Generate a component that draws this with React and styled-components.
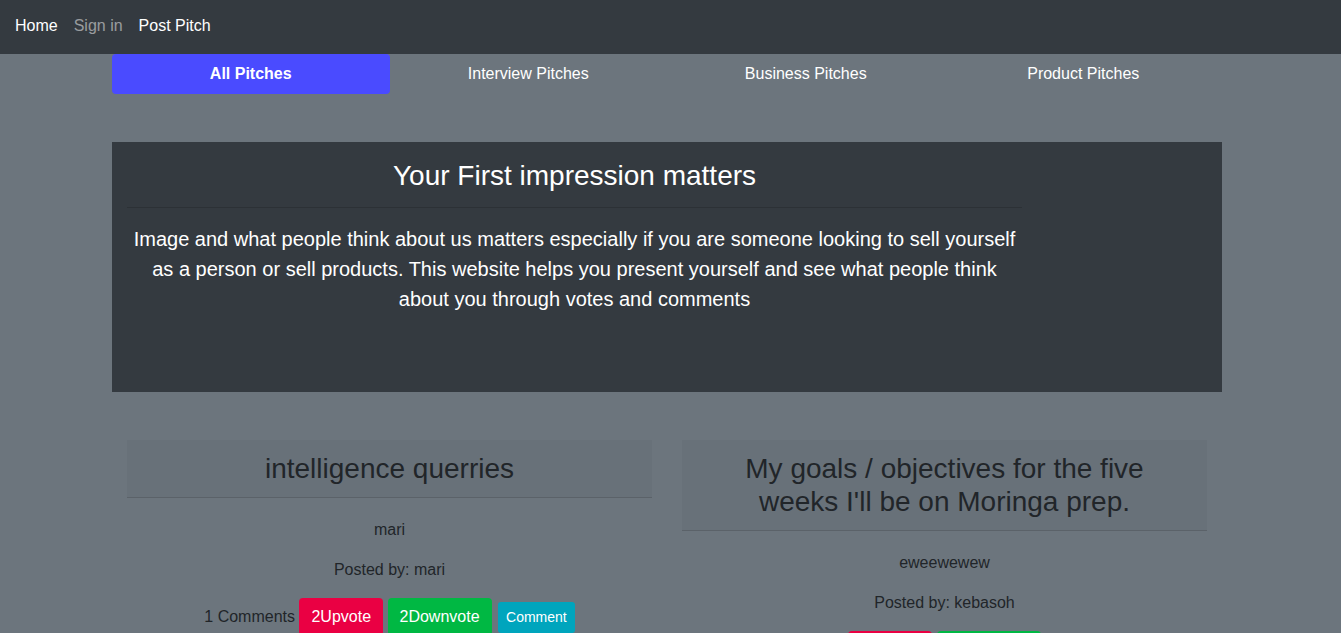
import React from 'react'
import styled, { createGlobalStyle } from 'styled-components'

const GlobalStyle = createGlobalStyle`
  body {
    margin: 0;
    background: #6c757d;
    font-family: "Liberation Sans", Arial, sans-serif;
    font-size: 16px;
    line-height: 1.5;
    color: #212529;
  }
  * { box-sizing: border-box; }
`

const Navbar = styled.nav`
  height: 54px;
  background: #343a40;
  display: flex;
  align-items: center;
  padding: 0 7px 2px;
`

const NavLink = styled.a`
  padding: 0 8px;
  color: ${p => (p.muted ? 'rgba(255,255,255,0.5)' : '#fff')};
  text-decoration: none;
  font-size: 16px;
`

const Container = styled.div`
  width: 1110px;
  margin: 0 0 0 112px;
`

const Tabs = styled.div`
  display: grid;
  grid-template-columns: repeat(4, 1fr);
`

const Tab = styled.a`
  height: 40px;
  display: flex;
  align-items: center;
  justify-content: center;
  color: #fff;
  text-decoration: none;
  border-radius: 4px;
  font-weight: ${p => (p.active ? 700 : 400)};
  background: ${p => (p.active ? '#4a4bff' : 'transparent')};
`

const Jumbotron = styled.section`
  margin-top: 48px;
  height: 250px;
  background: #343a40;
  padding: 0 15px;
`

const Intro = styled.div`
  width: 895px;
  text-align: center;
  color: #fff;
`

const IntroTitle = styled.h3`
  margin: 0;
  padding-top: 17px;
  font-size: 28px;
  font-weight: 400;
  line-height: 1.2;
`

const Rule = styled.hr`
  margin: 14px 0 16px;
  border: 0;
  border-top: 1px solid rgba(0, 0, 0, 0.15);
`

const Lead = styled.p`
  margin: 0;
  font-size: 20px;
  line-height: 30px;
`

const Cards = styled.div`
  display: grid;
  grid-template-columns: 1fr 1fr;
  margin-top: 48px;
`

const Col = styled.div`
  padding: 0 15px;
`

const CardHeader = styled.div`
  padding: 12px 20px;
  background: rgba(0, 0, 0, 0.03);
  border-bottom: 1px solid rgba(0, 0, 0, 0.125);
  text-align: center;
`

const CardTitle = styled.h3`
  margin: 0;
  font-size: 28px;
  font-weight: 400;
  line-height: 33px;
  color: #212529;
  padding: 0 ${p => p.inset || 0}px;
`

const CardBody = styled.div`
  padding: 20px;
  text-align: center;
`

const Text = styled.p`
  margin: 0 0 16px;
`

const Actions = styled.div`
  line-height: 1.5;
`

const Button = styled.button`
  display: inline-block;
  vertical-align: baseline;
  border: 0;
  border-radius: ${p => (p.small ? '3px' : '4px')};
  padding: ${p => (p.small ? '5px 8px' : '7px 12px')};
  margin-left: ${p => (p.small ? '2px' : '0')};
  font-family: inherit;
  font-size: ${p => (p.small ? '14px' : '16px')};
  line-height: 1.5;
  color: #fff;
  background: ${p => p.color};
`

const pitches = [
  {
    title: 'intelligence querries',
    body: 'mari',
    author: 'mari',
    comments: 1,
    up: 2,
    down: 2,
    showComments: true,
  },
  {
    title: "My goals / objectives for the five weeks I'll be on Moringa prep.",
    body: 'eweewewew',
    author: 'kebasoh',
    up: 2,
    down: 2,
    inset: 40,
  },
]

const PitchCard = ({ pitch }) => (
  <Col>
    <CardHeader>
      <CardTitle inset={pitch.inset}>{pitch.title}</CardTitle>
    </CardHeader>
    <CardBody>
      <Text>{pitch.body}</Text>
      <Text>Posted by: {pitch.author}</Text>
      <Actions>
        {pitch.showComments && <>{pitch.comments} Comments </>}
        <Button color="#ea0043">{pitch.up}Upvote</Button>{' '}
        <Button color="#00b843">{pitch.down}Downvote</Button>{' '}
        {pitch.showComments && <Button small color="#00a5bd">Comment</Button>}
      </Actions>
    </CardBody>
  </Col>
)

export default function App() {
  return (
    <>
      <GlobalStyle />
      <Navbar>
        <NavLink href="#">Home</NavLink>
        <NavLink href="#" muted>Sign in</NavLink>
        <NavLink href="#">Post Pitch</NavLink>
      </Navbar>
      <Container>
        <Tabs>
          <Tab active>All Pitches</Tab>
          <Tab>Interview Pitches</Tab>
          <Tab>Business Pitches</Tab>
          <Tab>Product Pitches</Tab>
        </Tabs>
        <Jumbotron>
          <Intro>
            <IntroTitle>Your First impression matters</IntroTitle>
            <Rule />
            <Lead>
              Image and what people think about us matters especially if you are someone looking to sell yourself
              as a person or sell products. This website helps you present yourself and see what people think
              about you through votes and comments
            </Lead>
          </Intro>
        </Jumbotron>
        <Cards>
          {pitches.map(p => <PitchCard key={p.title} pitch={p} />)}
        </Cards>
      </Container>
    </>
  )
}
